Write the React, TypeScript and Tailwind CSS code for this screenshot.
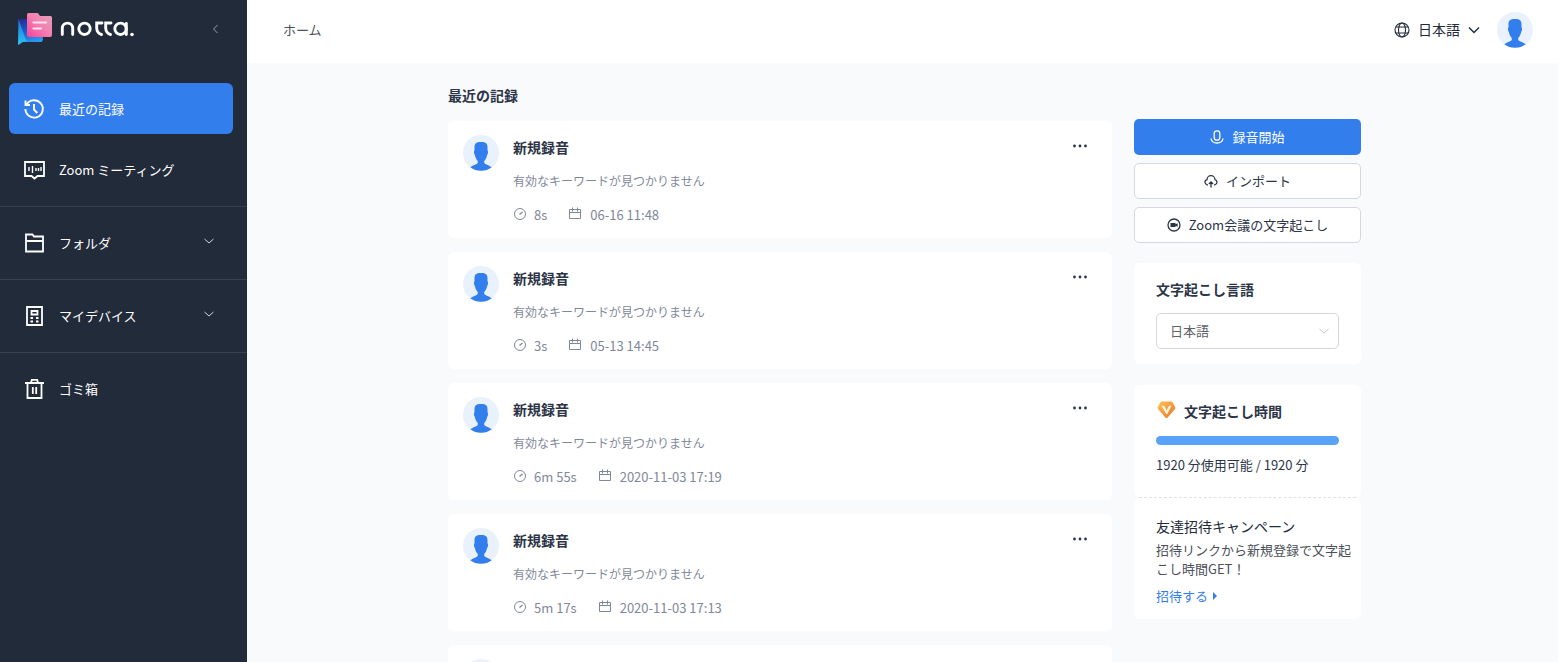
import type { ReactNode } from "react";

const recordings = [
  { id: 1, duration: "8s", date: "06-16 11:48" },
  { id: 2, duration: "3s", date: "05-13 14:45" },
  { id: 3, duration: "6m 55s", date: "2020-11-03 17:19" },
  { id: 4, duration: "5m 17s", date: "2020-11-03 17:13" },
];

const Logo = () => (
  <svg width="118" height="36" viewBox="0 0 118 36" fill="none" aria-label="notta">
    <defs>
      <linearGradient id="bubble" x1="0" y1="0" x2="0.3" y2="1">
        <stop offset="0" stopColor="#24288f" />
        <stop offset="0.55" stopColor="#1b5fd0" />
        <stop offset="1" stopColor="#2b9bee" />
      </linearGradient>
      <linearGradient id="flap" x1="0" y1="0" x2="0" y2="1">
        <stop offset="0" stopColor="#1f74e0" />
        <stop offset="1" stopColor="#2cc5ee" />
      </linearGradient>
      <linearGradient id="note" x1="1" y1="0" x2="0" y2="1">
        <stop offset="0" stopColor="#e3a3bb" />
        <stop offset="0.5" stopColor="#f47fb0" />
        <stop offset="1" stopColor="#fb3f9a" />
      </linearGradient>
    </defs>
    <path d="M2 9h22l2 21-1.500 2H6l-4.500 3z" fill="url(#bubble)" />
    <path d="M1.500 9l6.500 18.500 2 4-5 .5-4 3z" fill="url(#flap)" />
    <path d="M11.500 3h9q1 0 1.500 1.500L23 6h10.500q1.500 0 1.500 1.500V25q0 2-2 2H12q-2 0-2-2V4.500Q10 3 11.500 3z" fill="url(#note)" />
    <path d="M16.500 12.500H29M16.500 18.500H24" stroke="#ffe3f0" strokeWidth="2.200" strokeLinecap="round" />
    <g stroke="#fff" strokeWidth="2.900" strokeLinecap="round">
      <path d="M45.300 24.500V18.300a5.200 5.200 0 0 1 10.400 0v6.200" />
      <circle cx="67.500" cy="18.800" r="5.700" />
      <path d="M85 13h-5.300v5.300q.2 4.800 4.800 6.200M94 13h-5.300v5.300q.2 4.800 4.800 6.200" />
      <circle cx="103.500" cy="18.800" r="5.700" />
      <path d="M109.300 13.500v11" />
    </g>
    <circle cx="115" cy="24.500" r="1.800" fill="#fff" />
  </svg>
);

const Chevron = ({ className, direction = "down" }: { className?: string; direction?: "down" | "left" }) => (
  <svg className={className} width="12" height="12" viewBox="0 0 12 12" fill="none" stroke="currentColor">
    <path d={direction === "down" ? "M1.500 4l4.500 4 4.500-4" : "M8.500 2L4.500 6l4 4"} />
  </svg>
);

const Avatar = () => (
  <svg className="shrink-0" width="36" height="36" viewBox="0 0 36 36">
    <circle cx="18" cy="18" r="18" fill="#e9f1fd" />
    <path
      d="M11.500 12.500C11.500 8.500 13 7 18 7s6.500 1.500 6.500 5.500v2.800c.9.700.6 3.900-.4 4.700-.3 2.500-1.500 4.500-2.700 5.800-.7 1.800.1 2.900 2 3.800 1.800.8 3.800 1.500 5.300 2.700A18 18 0 0 1 7.300 32.300c1.500-1.200 3.500-1.900 5.300-2.700 1.900-.9 2.700-2 2-3.800-1.200-1.300-2.400-3.300-2.700-5.800-1-.8-1.300-4-.4-4.700z"
      fill="#337eed"
    />
  </svg>
);

const HistoryIcon = () => (
  <svg width="22" height="22" viewBox="0 0 22 22" fill="none" stroke="currentColor" strokeWidth="1.900">
    <path d="M3.600 6.500A8.700 8.700 0 1 1 2.400 11M2.500 2.500V7H7M11 6v5.500l3.300 3.500" />
  </svg>
);

const MeetingIcon = () => (
  <svg width="22" height="22" viewBox="0 0 22 22" fill="none" stroke="currentColor" strokeWidth="1.800">
    <path d="M2 3h19v14h-6.500l-3 2.500-3-2.500H2z" />
    <path d="M6 8v4M9.500 7v7M13 9v3M15.500 9v3M18 8v4" strokeWidth="1.400" />
  </svg>
);

const FolderIcon = () => (
  <svg width="22" height="22" viewBox="0 0 22 22" fill="none" stroke="currentColor" strokeWidth="1.800">
    <path d="M3 19.500v-17h6.500l1.500 2h9v15zM3 9h17" />
  </svg>
);

const DeviceIcon = () => (
  <svg width="22" height="22" viewBox="0 0 22 22" fill="none" stroke="currentColor" strokeWidth="1.800">
    <path d="M4 2h15v18H4zM8.500 6h6v3.500h-6z" />
    <path d="M7.500 13H10M13 13h2.500M7.500 16.500H10M13 16.500h2.500" />
  </svg>
);

const TrashIcon = () => (
  <svg width="22" height="22" viewBox="0 0 22 22" fill="none" stroke="currentColor" strokeWidth="1.800">
    <path d="M2 5h19M4.500 5v15h14V5M8 5l.8-3.200h5.400L15 5M9.800 9v7M13.200 9v7" />
  </svg>
);

const GlobeIcon = () => (
  <svg width="16" height="16" viewBox="0 0 16 16" fill="none" stroke="currentColor" strokeWidth="1.100">
    <circle cx="8" cy="8" r="7" />
    <ellipse cx="8" cy="8" rx="3.500" ry="7" />
    <path d="M1.800 5h12.400M1.800 11h12.400" />
  </svg>
);

const MicIcon = () => (
  <svg width="14" height="14" viewBox="0 0 14 14" fill="none" stroke="currentColor" strokeWidth="1.300">
    <rect x="4.200" y=".8" width="5.600" height="9.400" rx="2.600" />
    <path d="M1 8.500c1 6 11 6 12 0" />
  </svg>
);

const UploadIcon = () => (
  <svg width="14" height="14" viewBox="0 0 14 14" fill="none" stroke="currentColor" strokeWidth="1.300">
    <path d="M4 10.800H3.200a2.600 2.600 0 0 1-.2-5.100 4 4 0 0 1 8 0 2.600 2.600 0 0 1-.2 5.100H10M7 13.500V8M4.900 10L7 8l2.100 2" />
  </svg>
);

const VideoIcon = () => (
  <svg width="14" height="14" viewBox="0 0 14 14" fill="none" stroke="currentColor" strokeWidth="1.300">
    <circle cx="7" cy="7" r="6" />
    <path d="M3.500 5h5v1.200l2.200-.9v3.400l-2.200-.9V9h-5z" fill="currentColor" stroke="none" />
  </svg>
);

const DurationIcon = () => (
  <svg className="mb-[3px]" width="14" height="14" viewBox="0 0 14 14" fill="none" stroke="currentColor">
    <circle cx="7" cy="7" r="5.500" />
    <path d="M6.500 7.500L9.500 5" strokeWidth="1.300" />
  </svg>
);

const CalendarIcon = () => (
  <svg className="mb-[3px]" width="14" height="14" viewBox="0 0 14 14" fill="none" stroke="currentColor">
    <path d="M1.500 2.500h11v9h-11zM1.500 5.500h11M4.500.5v4M9.500.5v4" />
  </svg>
);

const GemIcon = () => (
  <svg className="mb-[2px]" width="20" height="18" viewBox="0 0 20 18">
    <defs>
      <linearGradient id="gem" x1="0" y1="0" x2="1" y2="1">
        <stop offset="0" stopColor="#fbc550" />
        <stop offset="1" stopColor="#ee7229" />
      </linearGradient>
    </defs>
    <path d="M6 .5h9q1 0 1.500.8l2.700 5q.5 1-.2 1.800l-7.300 8.400q-1.200 1.200-2.400 0L2 8.100q-.7-.8-.2-1.800l2.700-5Q5 .5 6 .5z" fill="url(#gem)" />
    <path d="M5.500 4.800h2.300q.6 0 .9.600l1.900 3.800 2.300-4.400h2.600L11.300 13h-1.200z" fill="#fff3df" />
  </svg>
);

type NavItemProps = { icon: ReactNode; label: string; expandable?: boolean };

const NavItem = ({ icon, label, expandable }: NavItemProps) => (
  <button className="flex w-full items-center py-[25px] pl-[23px] pr-8 text-left text-[13px] leading-5 text-white">
    {icon}
    <span className="ml-[14px] grow">{label}</span>
    {expandable && <Chevron className="mb-1 text-gray-300" />}
  </button>
);

const Sidebar = () => (
  <aside className="w-[247px] shrink-0 bg-[#222b3a] text-white">
    <div className="flex h-[83px] items-start justify-between pl-[17px] pr-[26px] pt-[10px]">
      <Logo />
      <button className="mt-[13px] text-gray-400" aria-label="閉じる">
        <Chevron direction="left" />
      </button>
    </div>
    <nav>
      <div className="pl-[9px] pr-[14px]">
        <button className="flex h-[51px] w-full items-center rounded-md bg-[#337eed] pl-[14px] text-[13px]">
          <HistoryIcon />
          <span className="ml-[14px]">最近の記録</span>
        </button>
      </div>
      <div className="divide-y divide-[#364050]">
        <NavItem icon={<MeetingIcon />} label="Zoom ミーティング" />
        <NavItem icon={<FolderIcon />} label="フォルダ" expandable />
        <NavItem icon={<DeviceIcon />} label="マイデバイス" expandable />
        <NavItem icon={<TrashIcon />} label="ゴミ箱" />
      </div>
    </nav>
  </aside>
);

const Header = () => (
  <header className="flex h-[63px] shrink-0 items-center justify-between bg-white pb-1 pl-9 pr-[25px]">
    <span className="text-[13px] text-[#4a4f58]">ホーム</span>
    <div className="flex items-center">
      <button className="flex items-center gap-2 text-[14px] text-[#222b3a]">
        <GlobeIcon />
        日本語
        <svg width="12" height="12" viewBox="0 0 12 12" fill="none" stroke="currentColor" strokeWidth="1.400">
          <path d="M1 3.500l5 5 5-5" />
        </svg>
      </button>
      <button className="ml-[17px]" aria-label="アカウント">
        <Avatar />
      </button>
    </div>
  </header>
);

const RecordingCard = ({ duration, date }: { duration: string; date: string }) => (
  <li className="flex h-[117px] items-start rounded-md bg-white pl-[15px] pr-6 pt-[14px]">
    <Avatar />
    <div className="ml-[14px] grow">
      <h2 className="text-[14px] font-bold leading-6 text-[#2c3547]">新規録音</h2>
      <p className="mt-3 text-[12px] leading-5 text-[#7f8899]">有効なキーワードが見つかりません</p>
      <div className="mt-[14px] flex items-center text-[13px] leading-5 text-[#7f8899]">
        <DurationIcon />
        <span className="ml-[7px] mr-[21px]">{duration}</span>
        <CalendarIcon />
        <span className="ml-2">{date}</span>
      </div>
    </div>
    <button className="mt-1 text-[#2c3547]" aria-label="メニュー">
      <svg width="16" height="14" viewBox="0 0 16 14" fill="currentColor">
        <circle cx="2.500" cy="7" r="1.400" />
        <circle cx="8" cy="7" r="1.400" />
        <circle cx="13.500" cy="7" r="1.400" />
      </svg>
    </button>
  </li>
);

const outlineButton =
  "flex h-9 w-full items-center justify-center gap-2 rounded-[5px] border border-[#d3d8e2] bg-white text-[13px] text-[#2c3547]";

const SidePanel = () => (
  <div className="w-[227px] shrink-0 pt-14">
    <div className="flex flex-col gap-2">
      <button className="flex h-9 w-full items-center justify-center gap-2 rounded-[5px] bg-[#337eed] text-[13px] text-white">
        <MicIcon />
        録音開始
      </button>
      <button className={outlineButton}>
        <UploadIcon />
        インポート
      </button>
      <button className={outlineButton}>
        <VideoIcon />
        Zoom会議の文字起こし
      </button>
    </div>

    <section className="mt-5 rounded-md bg-white px-[22px] pb-[15px] pt-[14px]">
      <label htmlFor="language" className="block text-[14px] font-bold leading-6 text-[#2c3547]">
        文字起こし言語
      </label>
      <div className="relative mt-3">
        <select
          id="language"
          className="h-9 w-full appearance-none rounded-[5px] border border-[#d5d6e3] bg-white pl-[13px] text-[13px] text-[#606266]"
        >
          <option>日本語</option>
        </select>
        <Chevron className="pointer-events-none absolute right-[9px] top-3 text-[#c0c4cc]" />
      </div>
    </section>

    <section className="mt-[21px] rounded-md bg-white px-[22px] pb-[22px] pt-[14px]">
      <h2 className="flex items-center gap-2 text-[14px] font-bold leading-6 text-[#2c3547]">
        <GemIcon />
        文字起こし時間
      </h2>
      <div className="mt-[13px] h-[9px] rounded-full bg-[#58a2f9]"></div>
      <p className="mt-[10px] whitespace-nowrap text-[13px] leading-5 text-[#2c3547]">1920 分使用可能 / 1920 分</p>
    </section>

    <div className="mx-[5px] border-t border-dashed border-[#dfe1e6] bg-white"></div>

    <section className="rounded-md bg-white pb-[13px] pl-[22px] pr-2 pt-4">
      <h2 className="text-[14px] leading-6 text-[#222b3a]">友達招待キャンペーン</h2>
      <p className="mt-[2px] text-[13px] leading-[19px] text-[#4a4f58]">招待リンクから新規登録で文字起こし時間GET！</p>
      <a href="#invite" className="mt-2 flex items-center gap-1 text-[13px] leading-5 text-[#337eed]">
        招待する
        <svg width="6" height="8" viewBox="0 0 6 8" fill="currentColor">
          <path d="M1 0l4 4-4 4z" />
        </svg>
      </a>
    </section>
  </div>
);

export default function App() {
  return (
    <div className="flex h-screen overflow-hidden font-['Noto_Sans_CJK_JP',sans-serif]">
      <Sidebar />
      <div className="flex min-w-0 grow flex-col bg-[#f9fafc]">
        <Header />
        <main className="min-h-0 grow overflow-hidden pl-1">
          <div className="mx-auto flex max-w-[913px] gap-[22px]">
            <div className="min-w-0 grow">
              <h1 className="mb-[14px] mt-5 text-[14px] font-bold leading-6 text-[#2c3547]">最近の記録</h1>
              <ul className="flex flex-col gap-[14px]">
                {recordings.map((item) => (
                  <RecordingCard key={item.id} duration={item.duration} date={item.date} />
                ))}
                <li className="flex h-[117px] items-start rounded-md bg-white pl-[15px] pt-[14px]">
                  <Avatar />
                </li>
              </ul>
            </div>
            <SidePanel />
          </div>
        </main>
      </div>
    </div>
  );
}
